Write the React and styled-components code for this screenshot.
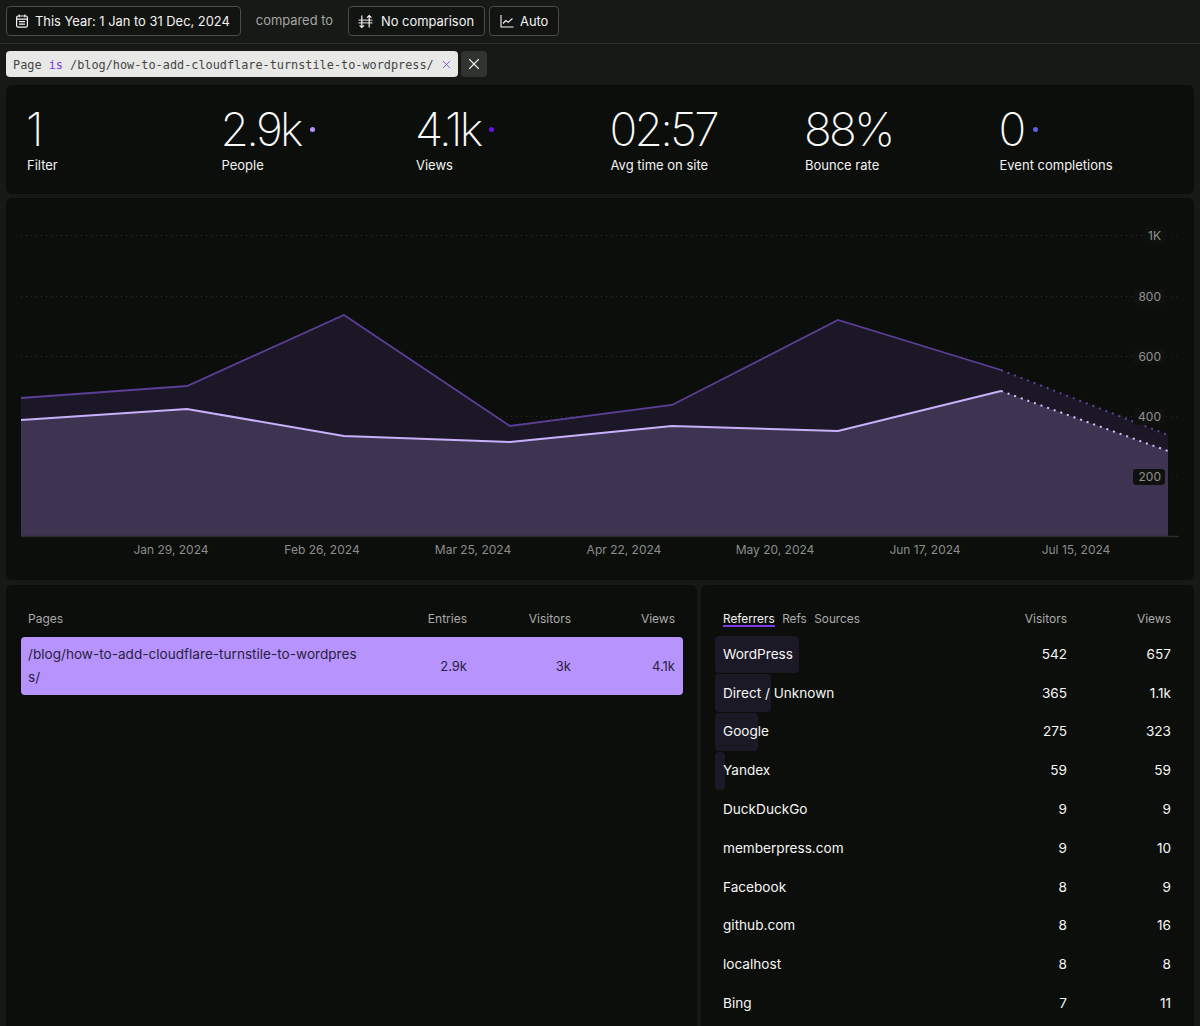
import React from "react";
import styled, { createGlobalStyle } from "styled-components";
import { X } from "lucide-react";

const Global = createGlobalStyle`
  html, body { margin: 0; padding: 0; background: #171917; }
  body { font-family: Inter, "Liberation Sans", sans-serif; color: #f4f4f4; overflow: hidden; }
  * { box-sizing: border-box; }
`;

const Page = styled.div`
  width: 1200px;
  height: 1026px;
  overflow: hidden;
`;

const TopBar = styled.div`
  height: 44px;
  padding: 6px 6px 0;
  display: flex;
  align-items: flex-start;
  gap: 4px;
  border-bottom: 1px solid #2c2e2c;
`;

const PillButton = styled.div`
  height: 30px;
  display: flex;
  align-items: center;
  gap: ${(p) => p.$gap || 6}px;
  padding: 0 10px 0 ${(p) => p.$left || 8}px;
  border: 1px solid #4a4c4a;
  border-radius: 4px;
  background: #121412;
  font-size: 12.9px;
  color: #f2f2f2;
  white-space: nowrap;
`;

const Compared = styled.span`
  font-size: 12.9px;
  line-height: 30px;
  color: #a4a6a4;
  padding: 0 11px;
`;

const FilterRow = styled.div`
  height: 41px;
  padding: 7px 6px 0;
  display: flex;
  gap: 3px;
`;

const FilterChip = styled.div`
  height: 26px;
  width: 452px;
  display: flex;
  align-items: center;
  justify-content: space-between;
  padding: 1px 5px 0 7px;
  background: #e8e8e6;
  border-radius: 4px;
  font-family: "DejaVu Sans Mono", "Liberation Mono", monospace;
  font-size: 11.85px;
  color: #454545;
  white-space: pre;
`;

const Keyword = styled.span`
  color: #7c3aed;
`;

const ClearButton = styled.div`
  width: 26px;
  height: 26px;
  display: flex;
  align-items: center;
  justify-content: center;
  background: #313331;
  border-radius: 4px;
  color: #f0f0f0;
`;

const Panel = styled.section`
  background: #0c0e0c;
  border-radius: 6px;
`;

const StatsPanel = styled(Panel)`
  margin: 0 6px;
  height: 109px;
  padding: 21px 22px 0 21px;
  display: grid;
  grid-template-columns: repeat(6, 194.5px);
`;

const Stat = styled.div`
  display: flex;
  flex-direction: column;
`;

const StatValue = styled.div`
  display: flex;
  align-items: center;
  gap: 9px;
  height: 47px;
  margin-left: -1px;
  font-size: 46px;
  line-height: 47px;
  font-weight: 200;
  letter-spacing: -2.7px;
  color: #fafafa;
`;

const Dot = styled.i`
  width: 5px;
  height: 5px;
  border-radius: 50%;
  background: ${(p) => p.$color};
`;

const StatLabel = styled.div`
  margin-top: 2px;
  font-size: 13px;
  line-height: 20px;
  color: #f2f2f2;
`;

const ChartPanel = styled(Panel)`
  margin: 4px 6px 0;
  height: 382px;
  svg { display: block; }
`;

const Bottom = styled.div`
  margin: 5px 6px 0;
  display: grid;
  grid-template-columns: 691px 493px;
  gap: 4px;
`;

const TablePanel = styled(Panel)`
  height: 460px;
  padding: 23.5px 14px 0 15px;
`;

const RefPanel = styled(TablePanel)`
  padding: 23.5px 23px 0 14px;
`;

const HeaderRow = styled.div`
  display: grid;
  grid-template-columns: ${(p) => p.$cols};
  height: 20px;
  padding: 0 ${(p) => p.$right}px 0 ${(p) => p.$left}px;
  font-size: 12px;
  line-height: 20px;
  color: #a9aba9;
`;

const Num = styled.div`
  text-align: right;
`;

const PageRow = styled.div`
  margin-top: 8.5px;
  height: 58px;
  display: grid;
  grid-template-columns: 340px 99px 104px 104px;
  align-items: center;
  padding: 0 8px 0 7px;
  background: #b794fd;
  border-radius: 4px;
  color: #2a2140;
  font-size: 13px;
  line-height: 23px;
`;

const PagePath = styled.div`
  font-size: 13.6px;
  word-break: break-all;
`;

const Tabs = styled.div`
  display: flex;
  gap: 7.5px;
  font-size: 11.8px;
`;

const Tab = styled.span`
  height: 18px;
  line-height: 20px;
  color: ${(p) => (p.$active ? "#f4f4f4" : "#a9aba9")};
  border-bottom: ${(p) => (p.$active ? "2px solid #7c3aed" : "none")};
`;

const RefList = styled.div`
  margin-top: 7px;
  display: flex;
  flex-direction: column;
  gap: 1px;
`;

const RefRow = styled.div`
  position: relative;
  height: 37.8px;
  display: grid;
  grid-template-columns: 1fr 104px 104px;
  align-items: center;
  padding: 0 0 1px 8px;
  font-size: 13.6px;
  color: #f6f6f6;
`;

const RefBar = styled.div`
  position: absolute;
  left: 0;
  top: 0;
  bottom: 0;
  background: #1c1926;
  border-radius: 4px;
`;

const RefName = styled.div`
  position: relative;
`;

const RefNum = styled(Num)`
  position: relative;
`;

const CalendarIcon = () => (
  <svg width="14" height="14" viewBox="0 0 14 14" fill="none" stroke="#f4f4f4" strokeWidth="1.2">
    <rect x="1.6" y="2" width="10.8" height="11.2" rx="1.6" />
    <path d="M4.2 .5v2.8M9.8 .5v2.8M1.6 5.2h10.8M4 7.7h6M4 10.2h6" />
  </svg>
);

const CompareIcon = () => (
  <svg width="15" height="15" viewBox="0 0 15 15" fill="none" stroke="#f4f4f4" strokeWidth="1.2">
    <path d="M3.8 1.5v12M1.6 11.3l2.2 2.2L6 11.3M11.2 13.5v-12M9 3.7l2.2-2.2 2.2 2.2" />
    <path d="M.5 6.2h14M.5 8.8h14" strokeOpacity="0.75" />
  </svg>
);

const TrendIcon = () => (
  <svg width="14" height="14" viewBox="0 0 14 14" fill="none" stroke="#f4f4f4" strokeWidth="1.1">
    <path d="M1 1v12h12.5M3 9.5l2.8-3 2.4 1.8L12.5 4.5" />
  </svg>
);

const TOP = [[21, 398], [187, 386], [344, 315], [510, 426], [672, 405], [838, 320], [1001, 370]];
const LOW = [[21, 420], [187, 409], [344, 436], [510, 442], [672, 426], [838, 431], [1001, 391]];
const TOP_END = [1168, 435];
const LOW_END = [1168, 451];
const BASE = 536;
const GRID = [
  { y: 235, label: "1K" },
  { y: 296, label: "800" },
  { y: 356, label: "600" },
  { y: 416, label: "400" },
  { y: 476, label: "200" },
];
const DATES = [
  [171, "Jan 29, 2024"], [322, "Feb 26, 2024"], [473, "Mar 25, 2024"], [624, "Apr 22, 2024"],
  [775, "May 20, 2024"], [925, "Jun 17, 2024"], [1076, "Jul 15, 2024"],
];

const pts = (list) => list.map((p) => p.join(",")).join(" ");

const Chart = () => (
  <svg width="1188" height="382" viewBox="6 198 1188 382" fontFamily="Inter, sans-serif" fontSize="12">
    {GRID.map((g) => (
      <line key={g.y} x1="21" x2="1179" y1={g.y + 0.5} y2={g.y + 0.5} stroke="#242624" strokeDasharray="1 4" />
    ))}
    <polygon points={`21,${BASE} ${pts(TOP)} ${TOP_END.join(",")} 1168,${BASE}`} fill="#1c1726" />
    <polygon points={`21,${BASE} ${pts(LOW)} ${LOW_END.join(",")} 1168,${BASE}`} fill="#3e3452" />
    {GRID.map((g) => (
      <line key={g.y} x1="21" x2="1168" y1={g.y + 0.5} y2={g.y + 0.5} stroke="#ffffff" strokeOpacity="0.04" strokeDasharray="1 4" />
    ))}
    <polyline points={pts(TOP)} fill="none" stroke="#5b3f96" strokeWidth="1.8" />
    <polyline points={pts(LOW)} fill="none" stroke="#c9b0fb" strokeWidth="2" />
    <polyline points={`${TOP[6].join(",")} ${TOP_END.join(",")}`} fill="none" stroke="#5f41a0" strokeWidth="2" strokeDasharray="2 5" />
    <polyline points={`${LOW[6].join(",")} ${LOW_END.join(",")}`} fill="none" stroke="#d6c5fc" strokeWidth="2" strokeDasharray="2 5" />
    <line x1="21" x2="1179" y1="536.5" y2="536.5" stroke="#2a2c2a" strokeWidth="1.5" />
    {GRID.map((g) => (
      <g key={g.label}>
        <rect x={g.label === "1K" ? 1143 : 1133} y={g.y - 7} width={g.label === "1K" ? 22 : 32} height="16" rx="3" fill="#0f110f" />
        <text x="1161" y={g.y + 4.5} textAnchor="end" fill="#8f918f">{g.label}</text>
      </g>
    ))}
    {DATES.map(([x, t]) => (
      <text key={t} x={x} y="554" textAnchor="middle" fill="#8b8d8b">{t}</text>
    ))}
  </svg>
);

const STATS = [
  { value: "1", label: "Filter" },
  { value: "2.9k", label: "People", dot: "#b794fd" },
  { value: "4.1k", label: "Views", dot: "#6d0fe8" },
  { value: "02:57", label: "Avg time on site" },
  { value: "88%", label: "Bounce rate" },
  { value: "0", label: "Event completions", dot: "#5561e8" },
];

const REFS = [
  ["WordPress", 542, 657, 84],
  ["Direct / Unknown", 365, "1.1k", 56],
  ["Google", 275, 323, 43],
  ["Yandex", 59, 59, 10],
  ["DuckDuckGo", 9, 9, 0],
  ["memberpress.com", 9, 10, 0],
  ["Facebook", 8, 9, 0],
  ["github.com", 8, 16, 0],
  ["localhost", 8, 8, 0],
  ["Bing", 7, 11, 0],
];

export default function App() {
  return (
    <Page>
      <Global />
      <TopBar>
        <PillButton>
          <CalendarIcon />
          This Year: 1 Jan to 31 Dec, 2024
        </PillButton>
        <Compared>compared to</Compared>
        <PillButton $left={9} $gap={8}>
          <CompareIcon />
          No comparison
        </PillButton>
        <PillButton $left={10}>
          <TrendIcon />
          Auto
        </PillButton>
      </TopBar>
      <FilterRow>
        <FilterChip>
          <span>
            Page <Keyword>is</Keyword> /blog/how-to-add-cloudflare-turnstile-to-wordpress/
          </span>
          <X size={13} color="#7c3aed" strokeWidth={1.5} />
        </FilterChip>
        <ClearButton>
          <X size={18} strokeWidth={1.5} />
        </ClearButton>
      </FilterRow>
      <StatsPanel>
        {STATS.map((s) => (
          <Stat key={s.label}>
            <StatValue>
              {s.value}
              {s.dot && <Dot $color={s.dot} />}
            </StatValue>
            <StatLabel>{s.label}</StatLabel>
          </Stat>
        ))}
      </StatsPanel>
      <ChartPanel>
        <Chart />
      </ChartPanel>
      <Bottom>
        <TablePanel>
          <HeaderRow $cols="340px 99px 104px 104px" $left={7} $right={8}>
            <div>Pages</div>
            <Num>Entries</Num>
            <Num>Visitors</Num>
            <Num>Views</Num>
          </HeaderRow>
          <PageRow>
            <PagePath>/blog/how-to-add-cloudflare-turnstile-to-wordpress/</PagePath>
            <Num>2.9k</Num>
            <Num>3k</Num>
            <Num>4.1k</Num>
          </PageRow>
        </TablePanel>
        <RefPanel>
          <HeaderRow $cols="1fr 104px 104px" $left={8} $right={0}>
            <Tabs>
              <Tab $active>Referrers</Tab>
              <Tab>Refs</Tab>
              <Tab>Sources</Tab>
            </Tabs>
            <Num>Visitors</Num>
            <Num>Views</Num>
          </HeaderRow>
          <RefList>
            {REFS.map(([name, visitors, views, bar]) => (
              <RefRow key={name}>
                {bar > 0 && <RefBar style={{ width: bar }} />}
                <RefName>{name}</RefName>
                <RefNum>{visitors}</RefNum>
                <RefNum>{views}</RefNum>
              </RefRow>
            ))}
          </RefList>
        </RefPanel>
      </Bottom>
    </Page>
  );
}
